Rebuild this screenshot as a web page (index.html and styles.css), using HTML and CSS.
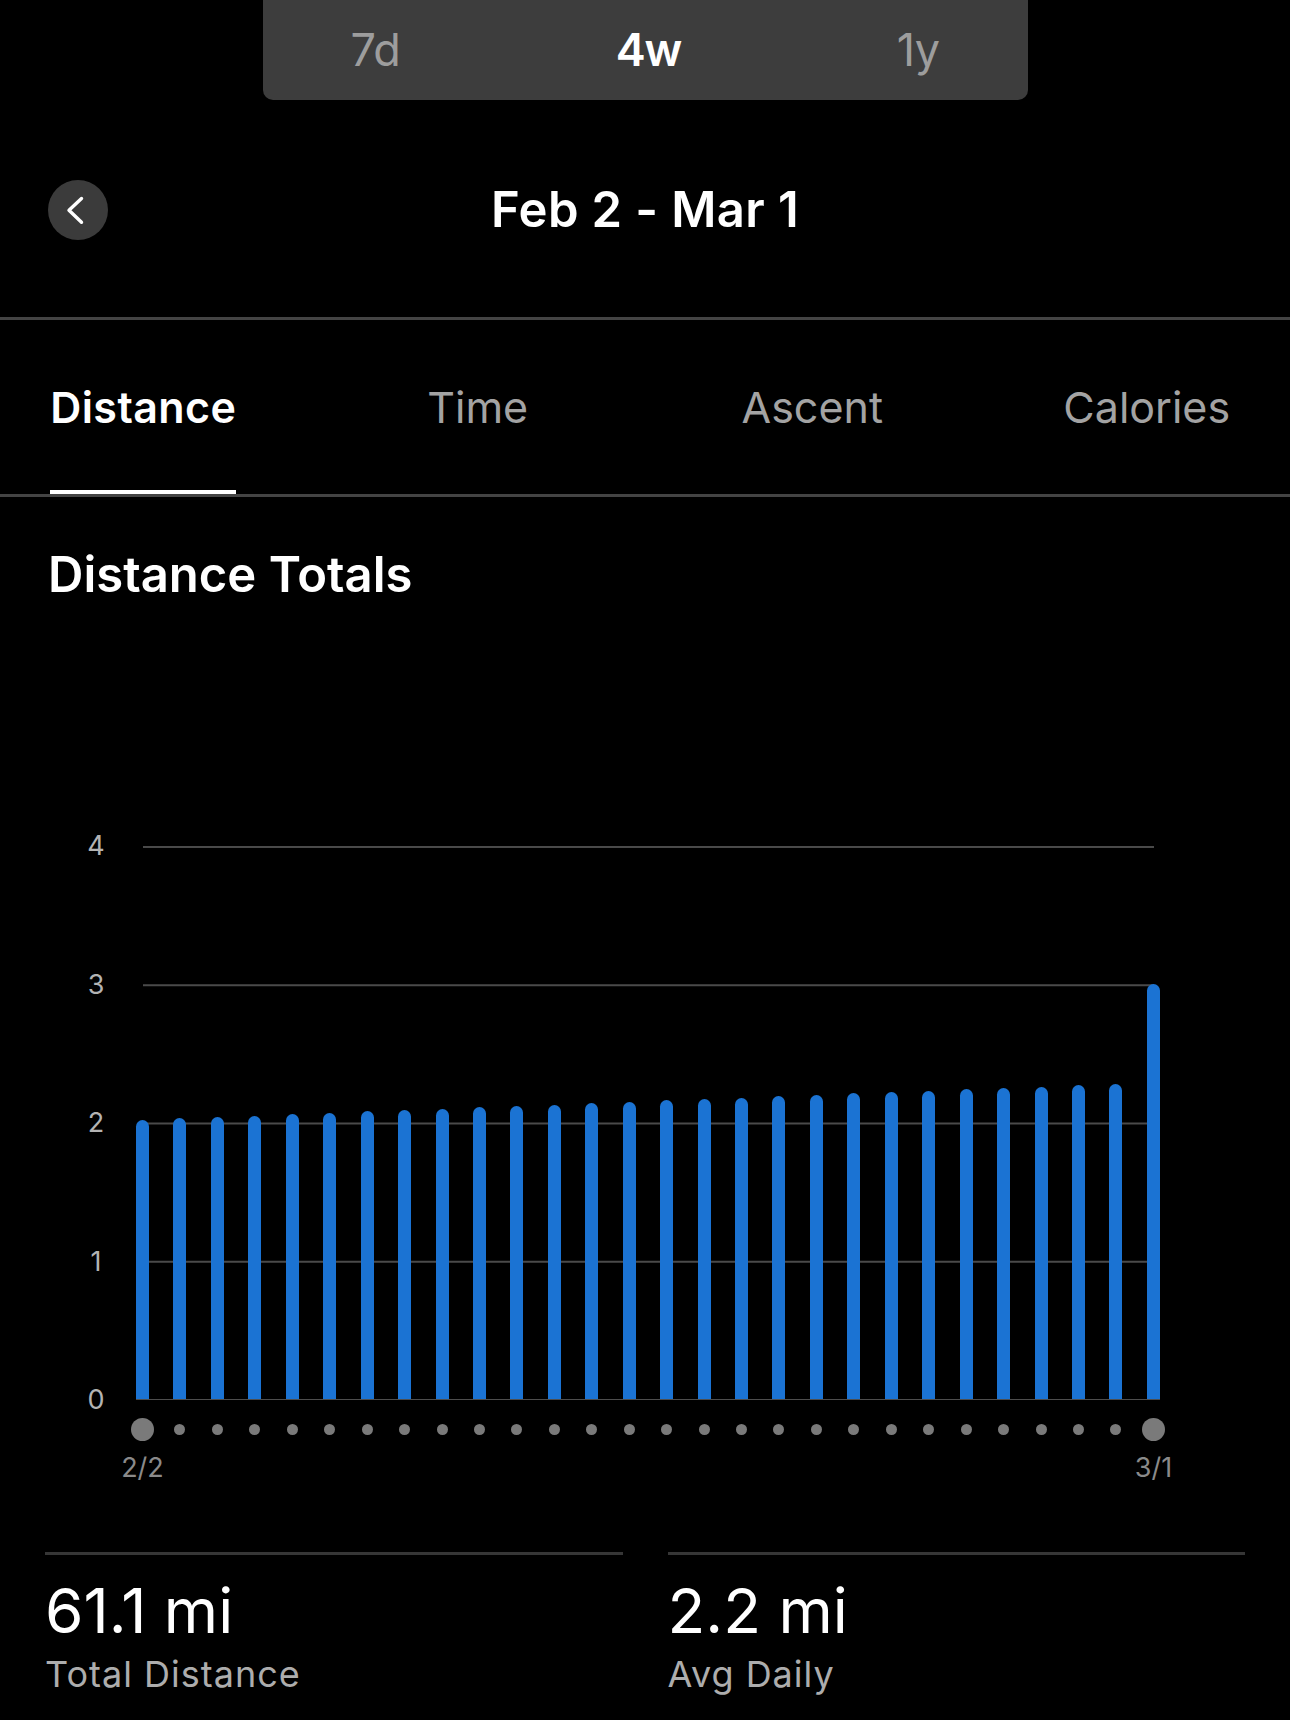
FILE: index.html
```html
<!DOCTYPE html>
<html lang="en">
<head>
<meta charset="utf-8">
<title>Distance Totals</title>
<link rel="stylesheet" href="styles.css">
</head>
<body>
<div class="screen">
  <div class="range-switch">
    <span class="range">7d</span>
    <span class="range is-active">4w</span>
    <span class="range">1y</span>
  </div>

  <header class="period">
    <button class="back" aria-label="Previous period">
      <svg width="60" height="60" viewBox="0 0 60 60" aria-hidden="true">
        <path d="M33.5 18.5 L21 30.3 L33.5 42.3" fill="none" stroke="#fff" stroke-width="3.4" stroke-linecap="round" stroke-linejoin="round"/>
      </svg>
    </button>
    <h1 class="period-title">Feb 2 - Mar 1</h1>
    <span class="period-spacer"></span>
  </header>

  <nav class="tabs">
    <div class="tab"><span class="tab-label is-active">Distance</span></div>
    <div class="tab"><span class="tab-label">Time</span></div>
    <div class="tab"><span class="tab-label">Ascent</span></div>
    <div class="tab"><span class="tab-label">Calories</span></div>
  </nav>

  <section class="chart-section">
    <h2 class="chart-title">Distance Totals</h2>
    <div class="chart">
      <div class="y-axis">
        <span>4</span><span>3</span><span>2</span><span>1</span><span>0</span>
      </div>
      <div class="plot-col">
        <div class="plot">
          <div class="bar" style="height:50.5%"></div>
          <div class="bar" style="height:50.75%"></div>
          <div class="bar" style="height:51%"></div>
          <div class="bar" style="height:51.25%"></div>
          <div class="bar" style="height:51.5%"></div>
          <div class="bar" style="height:51.75%"></div>
          <div class="bar" style="height:52%"></div>
          <div class="bar" style="height:52.25%"></div>
          <div class="bar" style="height:52.5%"></div>
          <div class="bar" style="height:52.75%"></div>
          <div class="bar" style="height:53%"></div>
          <div class="bar" style="height:53.25%"></div>
          <div class="bar" style="height:53.5%"></div>
          <div class="bar" style="height:53.75%"></div>
          <div class="bar" style="height:54%"></div>
          <div class="bar" style="height:54.25%"></div>
          <div class="bar" style="height:54.5%"></div>
          <div class="bar" style="height:54.75%"></div>
          <div class="bar" style="height:55%"></div>
          <div class="bar" style="height:55.25%"></div>
          <div class="bar" style="height:55.5%"></div>
          <div class="bar" style="height:55.75%"></div>
          <div class="bar" style="height:56%"></div>
          <div class="bar" style="height:56.25%"></div>
          <div class="bar" style="height:56.5%"></div>
          <div class="bar" style="height:56.75%"></div>
          <div class="bar" style="height:57%"></div>
          <div class="bar" style="height:75%"></div>
        </div>
        <div class="dots">
          <span class="slot"><i class="dot dot-end"></i></span>
          <span class="slot"><i class="dot"></i></span>
          <span class="slot"><i class="dot"></i></span>
          <span class="slot"><i class="dot"></i></span>
          <span class="slot"><i class="dot"></i></span>
          <span class="slot"><i class="dot"></i></span>
          <span class="slot"><i class="dot"></i></span>
          <span class="slot"><i class="dot"></i></span>
          <span class="slot"><i class="dot"></i></span>
          <span class="slot"><i class="dot"></i></span>
          <span class="slot"><i class="dot"></i></span>
          <span class="slot"><i class="dot"></i></span>
          <span class="slot"><i class="dot"></i></span>
          <span class="slot"><i class="dot"></i></span>
          <span class="slot"><i class="dot"></i></span>
          <span class="slot"><i class="dot"></i></span>
          <span class="slot"><i class="dot"></i></span>
          <span class="slot"><i class="dot"></i></span>
          <span class="slot"><i class="dot"></i></span>
          <span class="slot"><i class="dot"></i></span>
          <span class="slot"><i class="dot"></i></span>
          <span class="slot"><i class="dot"></i></span>
          <span class="slot"><i class="dot"></i></span>
          <span class="slot"><i class="dot"></i></span>
          <span class="slot"><i class="dot"></i></span>
          <span class="slot"><i class="dot"></i></span>
          <span class="slot"><i class="dot"></i></span>
          <span class="slot"><i class="dot dot-end"></i></span>
        </div>
        <div class="dates">
          <span class="date">2/2</span>
          <span class="date">3/1</span>
        </div>
      </div>
    </div>
  </section>

  <section class="stats">
    <div class="stat">
      <div class="stat-value">61.1 mi</div>
      <div class="stat-label">Total Distance</div>
    </div>
    <div class="stat">
      <div class="stat-value">2.2 mi</div>
      <div class="stat-label">Avg Daily</div>
    </div>
  </section>
</div>
</body>
</html>
```

FILE: styles.css
```css
* {
  box-sizing: border-box;
}

html, body {
  margin: 0;
  padding: 0;
  background: #000;
}

body {
  font-family: Inter, "Liberation Sans", "Noto Sans", sans-serif;
  color: #fff;
}

.screen {
  width: 1290px;
  height: 1720px;
  overflow: hidden;
  background: #000;
}

/* ---------- range switch ---------- */
.range-switch {
  width: 765px;
  height: 100px;
  margin: 0 auto;
  padding: 0 88px;
  display: flex;
  align-items: center;
  justify-content: space-between;
  background: #3d3d3d;
  border-radius: 0 0 10px 10px;
}

.range {
  font-size: 45px;
  line-height: 54px;
  color: #9d9d9d;
  letter-spacing: -0.5px;
}

.range.is-active {
  color: #fff;
  font-weight: 600;
  letter-spacing: -1.2px;
}

/* ---------- period header ---------- */
.period {
  height: 217px;
  margin-top: 3px;
  padding: 0 48px;
  display: grid;
  grid-template-columns: 1fr auto 1fr;
  align-items: center;
  border-bottom: 3px solid #444;
}

.back {
  justify-self: start;
  width: 60px;
  height: 60px;
  padding: 0;
  margin: 0;
  border: 0;
  border-radius: 50%;
  background: #3b3b3b;
  display: flex;
  align-items: center;
  justify-content: center;
}

.back svg {
  display: block;
}

.period-title {
  margin: 0;
  font-size: 49px;
  line-height: 60px;
  font-weight: 600;
  letter-spacing: 0.4px;
}

/* ---------- tabs ---------- */
.tabs {
  display: grid;
  grid-template-columns: repeat(4, 334.5px);
  justify-content: center;
  height: 177px;
  border-bottom: 3px solid #444;
}

.tab {
  display: flex;
  justify-content: center;
  align-items: flex-end;
}

.tab-label {
  display: block;
  padding: 60px 0 56px;
  font-size: 43px;
  line-height: 54px;
  color: #a3a3a3;
  letter-spacing: 0;
  border-bottom: 4px solid transparent;
}

.tab-label.is-active {
  color: #fff;
  font-weight: 600;
  letter-spacing: 0.4px;
  border-bottom-color: #fff;
}

/* ---------- chart ---------- */
.chart-section {
  padding: 48px 0 0;
}

.chart-title {
  margin: 0;
  padding-left: 48px;
  font-size: 49px;
  line-height: 60px;
  font-weight: 600;
  letter-spacing: 0;
}

.chart {
  display: flex;
  align-items: flex-start;
  margin-top: 227px;
  padding-left: 78px;
}

.y-axis {
  width: 36px;
  height: 582px;
  display: flex;
  flex-direction: column;
  justify-content: space-between;
  align-items: center;
}

.y-axis span {
  font-size: 27px;
  line-height: 28px;
  color: #b3b3b3;
}

.plot-col {
  width: 1024px;
  margin-left: 22px;
  margin-top: 14px;
}

.plot {
  height: 554px;
  display: flex;
  align-items: flex-end;
  justify-content: space-between;
  border-bottom: 1px solid #4d4d4d;
  background-image: linear-gradient(to bottom, #4a4a4a 0, #4a4a4a 1.5px, transparent 1.5px);
  background-size: calc(100% - 13px) 25%;
  background-position: 6.5px 0;
  background-repeat: repeat-y;
}

.bar {
  width: 13px;
  background: #1b73d3;
  border-radius: 6.5px 6.5px 0 0;
}

.dots {
  margin-top: 17.5px;
  height: 23px;
  display: flex;
  justify-content: space-between;
  align-items: center;
}

.slot {
  width: 13px;
  height: 23px;
  display: flex;
  justify-content: center;
  align-items: center;
}

.dot {
  flex-shrink: 0;
  display: block;
  width: 11px;
  height: 11px;
  border-radius: 50%;
  background: #7a7a7a;
}

.dot.dot-end {
  width: 23px;
  height: 23px;
}

.dates {
  margin-top: 13.5px;
  display: flex;
  justify-content: space-between;
}

.date {
  width: 60px;
  margin: 0 -23.5px;
  text-align: center;
  font-size: 27px;
  line-height: 28px;
  color: #8a8a8a;
}

/* ---------- stats ---------- */
.stats {
  margin-top: 69.5px;
  padding: 0 45px;
  display: grid;
  grid-template-columns: 1fr 1fr;
  column-gap: 45px;
}

.stat {
  border-top: 3px solid #363636;
  padding-top: 19px;
}

.stat-value {
  font-size: 62px;
  line-height: 74px;
  font-weight: 400;
  letter-spacing: 0;
}

.stat-label {
  margin-top: 4px;
  font-size: 36px;
  line-height: 44px;
  color: #adadad;
  letter-spacing: 1px;
}
```
